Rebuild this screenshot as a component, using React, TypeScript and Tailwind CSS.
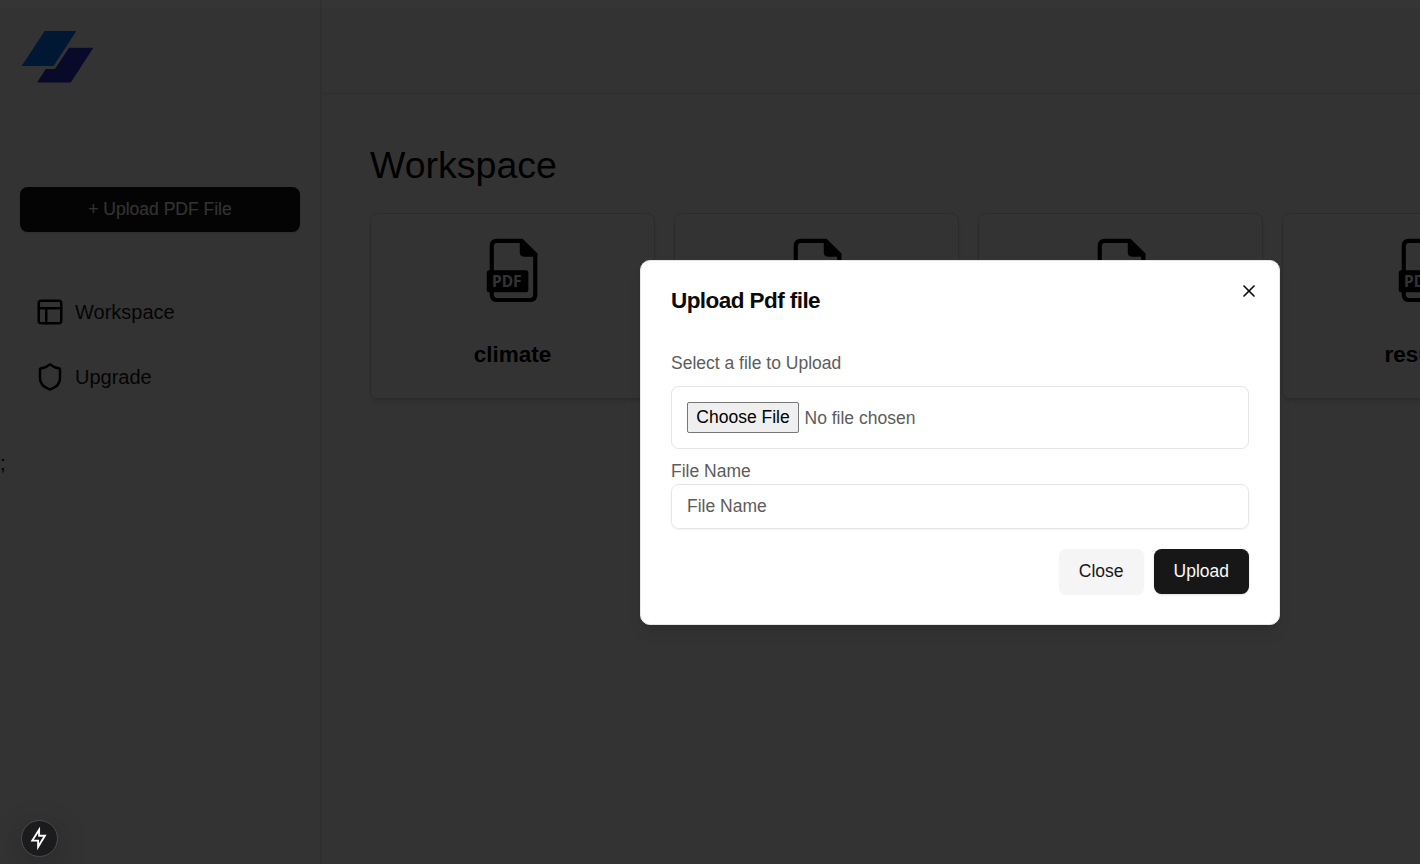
import React from "react";
import { PanelsTopLeft, Shield, X } from "lucide-react";

function Logo() {
  return (
    <svg className="ml-[1px] block" width="74" height="54" viewBox="21 30 74 54">
      <path fill="#007aff" d="M44.7 31H76.4L53.6 66H21.6Z" />
      <path fill="#312ecb" d="M69 47.8H93.4L70.8 82.6H37L45.8 69H55Z" />
    </svg>
  );
}

function PdfIcon() {
  return (
    <svg className="block" width="62.5" height="64" viewBox="481.25 238 62.5 64">
      <path
        d="M497 240.8H521.5L535.5 254.5V294.5Q535.5 300 530 300H497.5Q492 300 492 294.5V246.3Q492 240.8 497 240.8Z"
        fill="none"
        stroke="#000"
        strokeWidth="4.2"
      />
      <path d="M520 239H523L537.5 253.5V256.7H524.5Q520 256.7 520 252.2Z" />
      <rect x="487" y="270.3" width="41.6" height="22" rx="2.5" />
      <text
        x="492.3"
        y="287"
        className="fill-white font-[family-name:'Noto_Sans','Open_Sans',sans-serif] text-[15.5px] font-bold"
      >
        PDF
      </text>
    </svg>
  );
}

function NavItem({ icon, label }: { icon: React.ReactNode; label: string }) {
  return (
    <div className="flex h-[60px] items-center gap-2.5 px-[15px] text-[20px] text-[#171717]">
      {icon}
      <span>{label}</span>
    </div>
  );
}

function Sidebar() {
  return (
    <aside className="flex w-[321px] shrink-0 flex-col border-r border-gray-200 px-5 pt-[30px] shadow-sm">
      <Logo />
      <div className="mt-[103px] flex h-[45px] w-[280px] items-center justify-center rounded-[7.5px] bg-[#171717] text-[17.5px] text-white shadow-sm">
        <span>+ Upload PDF File</span>
      </div>
      <nav className="mt-[50px] flex flex-col gap-[5px]">
        <NavItem icon={<PanelsTopLeft size={30} className="text-black" />} label="Workspace" />
        <NavItem icon={<Shield size={30} className="text-black" />} label="Upgrade" />
      </nav>
    </aside>
  );
}

function FileCard({ name }: { name?: string }) {
  return (
    <div className="flex h-[186px] w-[285px] shrink-0 flex-col items-center rounded-[7.5px] border border-gray-300 pt-6 shadow-md">
      <PdfIcon />
      <h2 className="mt-[35px] h-[35px] text-[22.5px] font-bold leading-[35px] text-black">{name}</h2>
    </div>
  );
}

function UploadDialog() {
  return (
    <div
      role="dialog"
      className="absolute left-[640px] top-[260px] flex h-[365px] w-[640px] flex-col rounded-[10px] border border-gray-200 bg-white px-[30px] pt-[29px] text-[17.5px] text-[#5c5c5c] shadow-lg"
    >
      <div className="flex h-[23px] items-center justify-between">
        <h2 className="text-[22.5px] font-semibold leading-none tracking-[-0.025em] text-[#0a0a0a]">
          Upload Pdf file
        </h2>
        <X size={20} className="-mr-2.5 -mt-[21px] text-[#0a0a0a]" />
      </div>
      <p className="mt-[37.5px] leading-[25px]">Select a file to Upload</p>
      <div className="mt-[10.5px] flex h-[62.5px] items-center gap-[5.5px] rounded-[7.5px] border border-[#e5e5e5] px-[15px]">
        <button className="h-[31px] w-[112px] rounded-[2px] border border-[#767676] bg-[#efefef] leading-[27px] text-black">
          Choose File
        </button>
        <span className="mt-px">No file chosen</span>
      </div>
      <label className="mt-[10px] leading-[25px]">File Name</label>
      <div className="flex h-[45px] items-center rounded-[7.5px] border border-[#e5e5e5] px-[15px] shadow-xs">
        <span>File Name</span>
      </div>
      <div className="mt-5 flex justify-end gap-2.5">
        <button className="h-[45px] rounded-[7.5px] bg-[#f5f5f5] px-5 text-[#171717] shadow-xs">Close</button>
        <button className="h-[45px] rounded-[7.5px] bg-[#171717] px-5 text-[#fafafa] shadow-sm">Upload</button>
      </div>
    </div>
  );
}

function DevBadge() {
  return (
    <div className="absolute left-[20.5px] top-[820px] flex h-[37px] w-[37px] items-center justify-center rounded-full border border-[#4b4b4b] bg-[#1b1b1d] shadow-[0_8px_32px_rgba(0,0,0,0.24)]">
      <svg width="20" height="24" viewBox="29.5 826.8 20 24">
        <path
          d="M39.6 829.6L32.8 840.4H38.6V846.6L45.4 835.6H39.6Z"
          fill="none"
          stroke="#fff"
          strokeWidth="1.9"
        />
      </svg>
    </div>
  );
}

export default function App() {
  return (
    <div className="relative h-[864px] w-[1420px] overflow-hidden bg-white font-['Liberation_Sans',Arial,sans-serif]">
      <div className="flex h-full">
        <Sidebar />
        <main className="min-w-0 flex-1">
          <header className="h-[94px] border-b border-gray-200" />
          <section className="pl-[49px] pt-[49px]">
            <h1 className="h-[45px] text-[37.5px] leading-[45px] text-black">Workspace</h1>
            <div className="mt-[25px] flex gap-[19px]">
              <FileCard name="climate" />
              <FileCard />
              <FileCard />
              <FileCard name="resume" />
            </div>
          </section>
        </main>
      </div>
      <span className="absolute left-0 top-[448px] text-[20px] leading-[30px] text-black">;</span>
      <div className="absolute inset-0 bg-black/80" />
      <div className="absolute inset-x-0 top-0 h-2 bg-white/[0.01]" />
      <UploadDialog />
      <DevBadge />
    </div>
  );
}
